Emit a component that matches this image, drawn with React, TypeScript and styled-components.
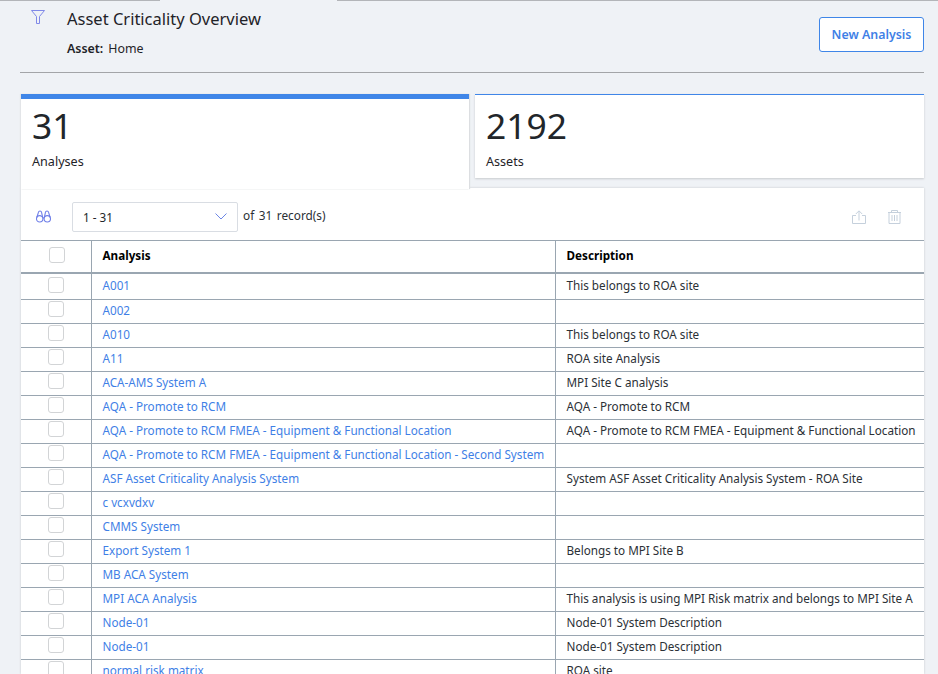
import { createGlobalStyle, styled } from "styled-components";

const GlobalStyle = createGlobalStyle`
  html, body {
    margin: 0;
    height: 100%;
    overflow: hidden;
    background: #eff2f6;
    font-family: "Noto Sans", sans-serif;
    color: #1f2328;
  }
`;

const Page = styled.div`
  width: 938px;
  height: 674px;
  overflow: hidden;
`;

const TopEdge = styled.div`
  display: flex;
  height: 1px;
`;

const TopEdgePart = styled.div<{ $w?: number; $on?: boolean }>`
  flex: ${(p) => (p.$w ? `0 0 ${p.$w}px` : "1")};
  background: ${(p) => (p.$on ? "#b3b5b9" : "transparent")};
`;

const Header = styled.header`
  display: flex;
  justify-content: space-between;
  align-items: flex-start;
  height: 71px;
  margin: 0 14px 0 20px;
  border-bottom: 1px solid #a3a5a8;
`;

const HeaderLeft = styled.div`
  display: flex;
`;

const FilterButton = styled.div`
  width: 47px;
  padding: 9px 0 0 11px;
  box-sizing: border-box;
  line-height: 0;
`;

const TitleBlock = styled.div`
  padding-top: 6px;
`;

const Title = styled.h1`
  margin: 0;
  font-size: 16.5px;
  font-weight: 400;
  line-height: 23px;
`;

const AssetLine = styled.div`
  display: flex;
  gap: 5px;
  margin-top: 10px;
  font-size: 12.4px;
  line-height: 18px;
`;

const AssetLabel = styled.span`
  font-weight: 600;
`;

const NewButton = styled.button`
  width: 105px;
  height: 35px;
  margin-top: 16px;
  padding: 0;
  background: #fff;
  border: 1px solid #3f86e8;
  border-radius: 3px;
  color: #3f7fe6;
  font-family: inherit;
  font-size: 12.4px;
  font-weight: 600;
`;

const Content = styled.main`
  margin: 21px 14px 0 21px;
`;

const Tiles = styled.div`
  display: flex;
  align-items: flex-start;
`;

const Tile = styled.div<{ $active?: boolean }>`
  position: relative;
  z-index: 1;
  box-sizing: border-box;
  flex: ${(p) => (p.$active ? "0 0 448px" : "1")};
  height: ${(p) => (p.$active ? "95px" : "84px")};
  margin-left: ${(p) => (p.$active ? "0" : "6px")};
  padding: ${(p) => (p.$active ? "4px 11px 0" : "8px 11px 0")};
  background: #fff;
  border-top: ${(p) => (p.$active ? "5px" : "1px")} solid #3f86e8;
  box-shadow: ${(p) => (p.$active ? "1px 0 1px #dcdee1, -1px 0 1px #e3e5e8" : "0 1px 2px #c8cacd")};
`;

const TileValue = styled.div`
  font-size: 35.4px;
  line-height: 44px;
  color: #22262a;
`;

const TileLabel = styled.div`
  margin-top: 6px;
  font-size: 12.6px;
  line-height: 18px;
`;

const Panel = styled.section`
  background: #fff;
  margin-top: -1px;
  box-shadow: 0 0 2px #c4c6c9;
  height: 486px;
  overflow: hidden;
`;

const Toolbar = styled.div`
  display: flex;
  align-items: center;
  box-sizing: border-box;
  height: 52px;
  padding: 5px 23px 0 15px;
  font-size: 11.8px;
`;

const ToolIcon = styled.div<{ $gap?: number }>`
  display: flex;
  margin-left: ${(p) => p.$gap ?? 0}px;
  line-height: 0;
`;

const RangeSelect = styled.div`
  display: flex;
  align-items: center;
  justify-content: space-between;
  box-sizing: border-box;
  width: 166px;
  height: 30px;
  margin: 0 5px 0 21px;
  padding: 0 10px 0 10px;
  border: 1px solid #d9dde3;
  border-radius: 2px;
  font-size: 11.7px;
  color: #22262a;
`;

const RecordCount = styled.span`
  flex: 1;
  margin-bottom: 4px;
  word-spacing: 1.5px;
  color: #2b3036;
`;

const Table = styled.table`
  width: 100%;
  table-layout: fixed;
  border-collapse: collapse;
  font-size: 11.7px;
`;

const HeadCell = styled.th<{ $w?: number }>`
  width: ${(p) => (p.$w ? `${p.$w}px` : "auto")};
  height: 32px;
  padding: 0 0 2px 11px;
  box-sizing: border-box;
  text-align: left;
  font-weight: 700;
  color: #000;
  border-top: 1px solid #9aa6b1;
  border-bottom: 2px solid #9aa6b1;
  border-left: 1px solid #9aa6b1;
  &:first-child {
    border-left: none;
    padding: 0;
  }
`;

const Cell = styled.td`
  height: 24px;
  padding: 0 0 4px 11px;
  box-sizing: border-box;
  white-space: nowrap;
  overflow: hidden;
  color: #2b3036;
  border-bottom: 1px solid #9aa6b1;
  border-left: 1px solid #9aa6b1;
  &:first-child {
    border-left: none;
    padding: 0;
  }
`;

const Check = styled.div<{ $head?: boolean }>`
  box-sizing: border-box;
  width: 16px;
  height: 16px;
  margin: ${(p) => (p.$head ? "-3px" : "-6px")} 0 0 ${(p) => (p.$head ? "28px" : "27px")};
  background: #fff;
  border: 1px solid #d2d4d6;
  border-radius: 3px;
`;

const Row = styled.tr`
  &:first-child td {
    height: 27px;
    padding-bottom: 2px;
  }
  &:first-child td:first-child {
    padding-bottom: 0;
  }
  &:first-child ${Check} {
    margin-top: -2px;
  }
`;

const AnalysisLink = styled.a`
  color: #3f7fe6;
  text-decoration: none;
`;

const rows: [string, string][] = [
  ["A001", "This belongs to ROA site"],
  ["A002", ""],
  ["A010", "This belongs to ROA site"],
  ["A11", "ROA site Analysis"],
  ["ACA-AMS System A", "MPI Site C analysis"],
  ["AQA - Promote to RCM", "AQA - Promote to RCM"],
  ["AQA - Promote to RCM FMEA - Equipment & Functional Location", "AQA - Promote to RCM FMEA - Equipment & Functional Location"],
  ["AQA - Promote to RCM FMEA - Equipment & Functional Location - Second System", ""],
  ["ASF Asset Criticality Analysis System", "System ASF Asset Criticality Analysis System - ROA Site"],
  ["c vcxvdxv", ""],
  ["CMMS System", ""],
  ["Export System 1", "Belongs to MPI Site B"],
  ["MB ACA System", ""],
  ["MPI ACA Analysis", "This analysis is using MPI Risk matrix and belongs to MPI Site A"],
  ["Node-01", "Node-01 System Description"],
  ["Node-01", "Node-01 System Description"],
  ["normal risk matrix", "ROA site"],
];

const FilterIcon = () => (
  <svg width="14" height="14" viewBox="0 0 14 14" fill="none" stroke="#8089e8" strokeWidth="1">
    <path d="M.5.5h13L8.5 6.5v7h-3v-7z" />
  </svg>
);

const BinocularsIcon = () => (
  <svg width="15" height="13" viewBox="0 0 15 13" fill="none" stroke="#6f7fe8" strokeWidth="1.1">
    <circle cx="3.7" cy="8.8" r="3.2" />
    <circle cx="11.3" cy="8.8" r="3.2" />
    <path d="M.8 7.5L2.5 2.2C2.8.6 5.2.6 5.5 2.2L6.7 7.5M14.2 7.5L12.5 2.2C12.2.6 9.8.6 9.5 2.2L8.3 7.5M6.8 8h1.4" />
  </svg>
);

const ChevronIcon = () => (
  <svg width="12" height="7" viewBox="0 0 12 7" fill="none" stroke="#6c86e6" strokeWidth="1">
    <path d="M.5.5L6 6 11.5.5" />
  </svg>
);

const ShareIcon = () => (
  <svg width="14" height="14" viewBox="0 0 14 14" fill="none" stroke="#c5d0dc" strokeWidth="1">
    <path d="M4 5.5H.5v8h13v-8H10M7 10.5V1M3.8 4L7 .8 10.2 4" />
  </svg>
);

const TrashIcon = () => (
  <svg width="13" height="14" viewBox="0 0 13 14" fill="none" stroke="#c5d0dc" strokeWidth="1">
    <path d="M1 2.5v11h11v-11M0 2.5h13M3.5 2.5V.5h6v2M4 5v6M6.5 5v6M9 5v6" />
  </svg>
);

export default function App() {
  return (
    <Page>
      <GlobalStyle />
      <TopEdge>
        <TopEdgePart $w={160} $on />
        <TopEdgePart $w={177} />
        <TopEdgePart $on />
      </TopEdge>
      <Header>
        <HeaderLeft>
          <FilterButton>
            <FilterIcon />
          </FilterButton>
          <TitleBlock>
            <Title>Asset Criticality Overview</Title>
            <AssetLine>
              <AssetLabel>Asset:</AssetLabel>
              <span>Home</span>
            </AssetLine>
          </TitleBlock>
        </HeaderLeft>
        <NewButton>New Analysis</NewButton>
      </Header>
      <Content>
        <Tiles>
          <Tile $active>
            <TileValue>31</TileValue>
            <TileLabel>Analyses</TileLabel>
          </Tile>
          <Tile>
            <TileValue>2192</TileValue>
            <TileLabel>Assets</TileLabel>
          </Tile>
        </Tiles>
        <Panel>
          <Toolbar>
            <ToolIcon>
              <BinocularsIcon />
            </ToolIcon>
            <RangeSelect>
              <span>1 - 31</span>
              <ChevronIcon />
            </RangeSelect>
            <RecordCount>of 31 record(s)</RecordCount>
            <ToolIcon>
              <ShareIcon />
            </ToolIcon>
            <ToolIcon $gap={22}>
              <TrashIcon />
            </ToolIcon>
          </Toolbar>
          <Table>
            <thead>
              <tr>
                <HeadCell $w={70}>
                  <Check $head />
                </HeadCell>
                <HeadCell $w={464}>Analysis</HeadCell>
                <HeadCell>Description</HeadCell>
              </tr>
            </thead>
            <tbody>
              {rows.map(([name, description], i) => (
                <Row key={i}>
                  <Cell>
                    <Check />
                  </Cell>
                  <Cell>
                    <AnalysisLink>{name}</AnalysisLink>
                  </Cell>
                  <Cell>{description}</Cell>
                </Row>
              ))}
            </tbody>
          </Table>
        </Panel>
      </Content>
    </Page>
  );
}
